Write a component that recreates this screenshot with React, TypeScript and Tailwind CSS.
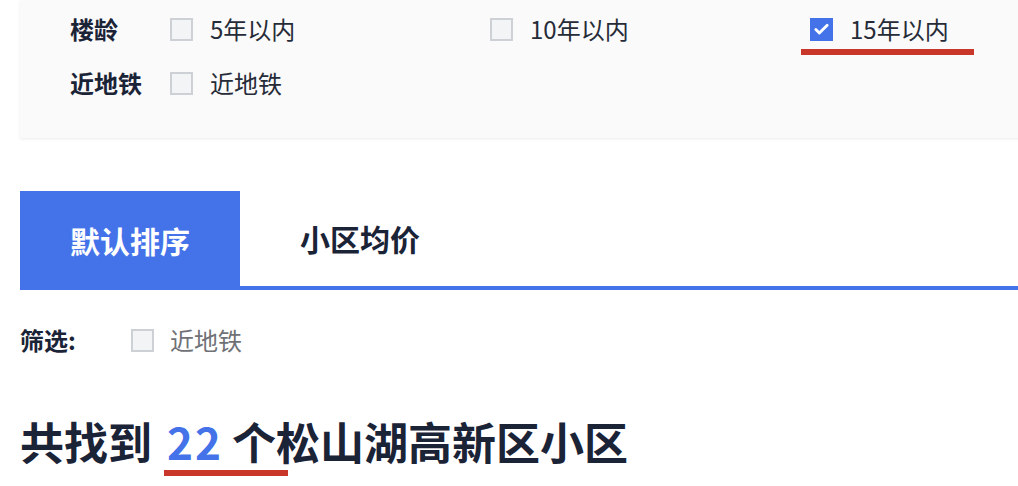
import { Check } from 'lucide-react';

const font = { fontFamily: '"Noto Sans CJK SC", "Liberation Sans", sans-serif' };

function Box({ checked = false }: { checked?: boolean }) {
  if (checked) {
    return (
      <span className="flex h-[23px] w-[23px] shrink-0 items-center justify-center bg-[#4473e9]">
        <Check className="h-[17px] w-[17px] text-white" strokeWidth={4} />
      </span>
    );
  }
  return <span className="block h-[23px] w-[23px] shrink-0 border-2 border-[#cdd0d4] bg-[#f3f4f6]" />;
}

function Option({ label, checked, mark }: { label: string; checked?: boolean; mark?: boolean }) {
  return (
    <div className="relative flex w-[320px] shrink-0 items-center gap-[17px]">
      <Box checked={checked} />
      <span className="text-[24px] text-[#262b38]">{label}</span>
      {mark && <span className="absolute left-[-9px] top-[38px] h-[6px] w-[173px] bg-[#c8372a]" />}
    </div>
  );
}

export default function App() {
  return (
    <div className="min-h-[486px] w-[1018px] overflow-hidden bg-white pl-[20px]" style={font}>
      {/* Filter panel */}
      <div className="w-[1040px] bg-[#fafafa] pb-[37px] pl-[50px] pt-[11px] shadow-[0_1px_3px_rgba(0,0,0,0.08)]">
        <div className="flex h-[36px] items-center">
          <span className="w-[100px] shrink-0 text-[24px] font-bold text-[#1b2337]">楼龄</span>
          <Option label="5年以内" />
          <Option label="10年以内" />
          <Option label="15年以内" checked mark />
        </div>
        <div className="mt-[18px] flex h-[36px] items-center">
          <span className="w-[100px] shrink-0 text-[24px] font-bold text-[#1b2337]">近地铁</span>
          <Option label="近地铁" />
        </div>
      </div>

      {/* Tabs */}
      <div className="mt-[53px] flex h-[99px]">
        <div className="flex w-[220px] items-center justify-center bg-[#4473e9] text-[30px] font-bold text-white">
          默认排序
        </div>
        <div className="flex flex-1 items-center border-b-4 border-[#4473e9] pl-[60px] text-[30px] font-bold text-[#1b2337]">
          小区均价
        </div>
      </div>

      {/* Sub filter */}
      <div className="mt-[35px] flex h-[30px] items-center">
        <span className="w-[111px] text-[24px] font-bold text-[#1b2337]">筛选:</span>
        <Box />
        <span className="ml-[16px] text-[24px] text-[#6f7176]">近地铁</span>
      </div>

      {/* Heading */}
      <h1 className="mt-[56px] flex text-[44px] font-bold leading-[60px] text-[#1b2337]">
        <span>共找到</span>
        <span className="relative ml-[15px] flex">
          <span className="mr-[9px] tracking-[2px] text-[#4473e9]">22</span>
          <span>个</span>
          <span className="absolute left-[-3px] top-[59px] h-[6px] w-[124px] bg-[#c8372a]" />
        </span>
        <span>松山湖高新区小区</span>
      </h1>
    </div>
  );
}
